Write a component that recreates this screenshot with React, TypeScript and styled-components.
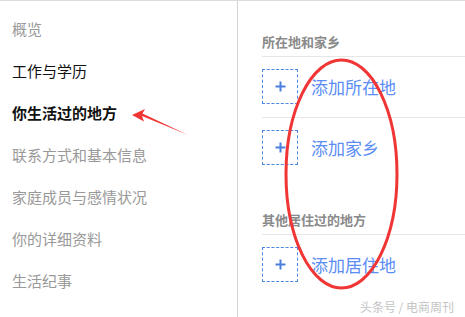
import React from 'react';
import styled, {createGlobalStyle} from 'styled-components';

const GlobalStyle = createGlobalStyle`
    html, body {
        margin:0;
        padding:0;
        background:#fff;
    }
    body {
        font-family: "Noto Sans CJK SC", "Noto Sans", sans-serif;
    }
`

const Page = styled.div`
    position:relative;
    width:465px;
    height:317px;
    overflow:hidden;
    border-top:1px solid #dcdcdc;
    box-sizing:border-box;
    display:flex;
`

const SideNav = styled.ul`
    list-style:none;
    margin:0;
    padding:7px 0 0 12px;
    width:238px;
    box-sizing:border-box;
    border-right:1px solid #d4d4d4;
`

const NavItem = styled.li<{state?: 'active' | 'dark'}>`
    height:42px;
    line-height:42px;
    font-size:15px;
    white-space:nowrap;
    color:${({state}) => state ? '#111' : '#999'};
    font-weight:${({state}) => state === 'active' ? 700 : 400};
`

const Content = styled.div`
    flex:1;
    padding:31px 0 0 24px;
`

const Section = styled.section`
    & + & {
        margin-top:32px;
    }
`

const Heading = styled.h3`
    margin:0;
    padding-bottom:4px;
    font-size:13px;
    line-height:20px;
    font-weight:700;
    color:#8a8a8a;
    border-bottom:1px solid #e6e6e6;
`

const AddRow = styled.div`
    display:flex;
    align-items:center;
    gap:13px;
    padding:12px 0 13px;
    & + & {
        border-top:1px solid #e6e6e6;
    }
`

const PlusBox = styled.div`
    width:36px;
    height:35px;
    box-sizing:border-box;
    border:1px dashed #4a86e8;
    display:flex;
    align-items:center;
    justify-content:center;
`

const AddText = styled.span`
    font-size:17px;
    line-height:22px;
    color:#5b8df5;
    white-space:nowrap;
`

const Overlay = styled.svg`
    position:absolute;
    left:0;
    top:0;
    pointer-events:none;
`

const Watermark = styled.div`
    position:absolute;
    right:11px;
    bottom:2px;
    font-size:12px;
    color:#c4c4c4;
    white-space:nowrap;
`

const Plus = () => (
    <svg width="11" height="11" viewBox="0 0 11 11">
        <path d="M5.5 0.5v10M0.5 5.5h10" stroke="#4a7fe0" strokeWidth="2"/>
    </svg>
)

const navItems: {label:string; state?:'active' | 'dark'}[] = [
    {label:'概览'},
    {label:'工作与学历', state:'dark'},
    {label:'你生活过的地方', state:'active'},
    {label:'联系方式和基本信息'},
    {label:'家庭成员与感情状况'},
    {label:'你的详细资料'},
    {label:'生活纪事'},
]

const sections = [
    {title:'所在地和家乡', items:['添加所在地', '添加家乡']},
    {title:'其他居住过的地方', items:['添加居住地']},
]

const App = () => {
    return (
        <Page>
            <GlobalStyle/>
            <SideNav>
                {navItems.map(item => (
                    <NavItem key={item.label} state={item.state}>{item.label}</NavItem>
                ))}
            </SideNav>
            <Content>
                {sections.map(section => (
                    <Section key={section.title}>
                        <Heading>{section.title}</Heading>
                        {section.items.map(text => (
                            <AddRow key={text}>
                                <PlusBox><Plus/></PlusBox>
                                <AddText>{text}</AddText>
                            </AddRow>
                        ))}
                    </Section>
                ))}
            </Content>
            <Overlay width="465" height="317" viewBox="0 0 465 317">
                <path d="M188 134 L142 115 L144 120.5 L132 114 L145 108 L142.5 112.5 Z" fill="#f03535"/>
                <ellipse cx="341.5" cy="173" rx="55.5" ry="114" fill="none" stroke="#f03535" strokeWidth="3"/>
            </Overlay>
            <Watermark>头条号 / 电商周刊</Watermark>
        </Page>
    )
}

export default App;
